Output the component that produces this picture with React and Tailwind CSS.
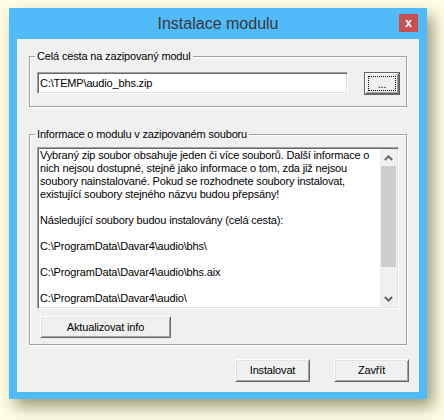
import React from "react";

const font = { fontFamily: '"Liberation Sans", Arial, sans-serif' };

function Btn({ children, className = "" }) {
  return (
    <div
      className={
        "flex items-center justify-center bg-[#f0f0f0] text-[11px] leading-[13px] text-black border border-t-white border-l-white border-r-[#696969] border-b-[#696969] shadow-[inset_1px_1px_0_#e3e3e3,inset_-1px_-1px_0_#a0a0a0] " +
        className
      }
    >
      {children}
    </div>
  );
}

function Group({ legend, children, className = "" }) {
  return (
    <fieldset
      className={
        "border border-[#a0a0a0] shadow-[1px_1px_0_#ffffff,inset_1px_1px_0_#ffffff] " +
        className
      }
    >
      <legend className="ml-[5px] px-[2px] text-[11px] leading-[12px] h-[12px] text-black">
        {legend}
      </legend>
      {children}
    </fieldset>
  );
}

const lines = [
  "Vybraný zip soubor obsahuje jeden či více souborů. Další informace o",
  "nich nejsou dostupné, stejně jako informace o tom, zda již nejsou",
  "soubory nainstalované. Pokud se rozhodnete soubory instalovat,",
  "existující soubory stejného názvu budou přepsány!",
  "",
  "Následující soubory budou instalovány (celá cesta):",
  "",
  "C:\\ProgramData\\Davar4\\audio\\bhs\\",
  "",
  "C:\\ProgramData\\Davar4\\audio\\bhs.aix",
  "",
  "C:\\ProgramData\\Davar4\\audio\\",
  "",
];

export default function App() {
  return (
    <div
      className="w-[444px] h-[420px] bg-[#fdfde3] pt-[8px] pl-[9px] overflow-hidden tracking-[-0.16px]"
      style={font}
    >
      <div className="w-[418px] h-[391px] bg-[#50bbf8] flex flex-col px-[8px] pb-[7px] shadow-[6px_8px_14px_rgba(80,80,40,0.55)]">
        <div className="h-[31px] relative flex items-center justify-center">
          <span className="text-[16px] leading-[20px] text-[#383838] tracking-normal">
            Instalace modulu
          </span>
          <div className="absolute right-[1px] top-[6px] w-[19px] h-[18px] bg-[#c75050] flex items-center justify-center">
            <span className="text-white text-[12px] font-bold leading-[12px] -mt-[1px]">
              x
            </span>
          </div>
        </div>
        <div className="flex-1 bg-[#f0f0f0] px-[12px] flex flex-col">
          <Group legend="Celá cesta na zazipovaný modul" className="mt-[11px] pt-[10px] pb-[11px]">
            <div className="flex items-start">
              <div className="ml-[7px] w-[311px] h-[22px] bg-white border border-t-[#a0a0a0] border-l-[#a0a0a0] border-r-white border-b-white shadow-[inset_1px_1px_0_#696969,inset_-1px_-1px_0_#e3e3e3] flex items-center pl-[2px] text-[11px] text-black">
                C:\TEMP\audio_bhs.zip
              </div>
              <div className="ml-[16px] w-[36px] h-[23px] border border-[#646464] bg-[#f0f0f0]">
                <div className="w-full h-full border border-t-white border-l-white border-r-[#696969] border-b-[#696969] shadow-[inset_-1px_-1px_0_#a0a0a0] p-[2px]">
                  <div className="w-full h-full border border-dotted border-black flex items-end justify-center text-[11px] leading-[12px] text-black">
                    ...
                  </div>
                </div>
              </div>
            </div>
          </Group>
          <Group legend="Informace o modulu v zazipovaném souboru" className="mt-[21px] pt-[7px] pb-[6px]">
            <div className="ml-[7px] w-[362px] h-[162px] bg-white border border-t-[#a0a0a0] border-l-[#a0a0a0] border-r-white border-b-white shadow-[inset_1px_1px_0_#696969,inset_-1px_-1px_0_#e3e3e3] p-[1px] flex">
              <div className="flex-1 overflow-hidden pl-[1px] text-[11px] leading-[13px] text-black whitespace-pre">
                {lines.map((l, i) => (
                  <div key={i} className="h-[13px]">
                    {l}
                  </div>
                ))}
              </div>
              <div className="w-[17px] bg-[#f0f0f0] flex flex-col items-center">
                <div className="h-[17px] w-full flex items-center justify-center">
                  <svg width="9" height="6" viewBox="0 0 9 6">
                    <path d="M0.8 5 L4.5 1.3 L8.2 5" fill="none" stroke="#606060" strokeWidth="1.8" />
                  </svg>
                </div>
                <div className="w-[15px] h-[101px] bg-[#cdcdcd]" />
                <div className="flex-1" />
                <div className="h-[17px] w-full flex items-center justify-center">
                  <svg width="9" height="6" viewBox="0 0 9 6">
                    <path d="M0.8 1 L4.5 4.7 L8.2 1" fill="none" stroke="#606060" strokeWidth="1.8" />
                  </svg>
                </div>
              </div>
            </div>
            <Btn className="mt-[7px] ml-[10px] w-[131px] h-[22px]">Aktualizovat info</Btn>
          </Group>
          <div className="mt-[14px] flex justify-end gap-[24px] -mr-[2px]">
            <Btn className="w-[75px] h-[23px]">Instalovat</Btn>
            <Btn className="w-[75px] h-[23px]">Zavřít</Btn>
          </div>
        </div>
      </div>
    </div>
  );
}
